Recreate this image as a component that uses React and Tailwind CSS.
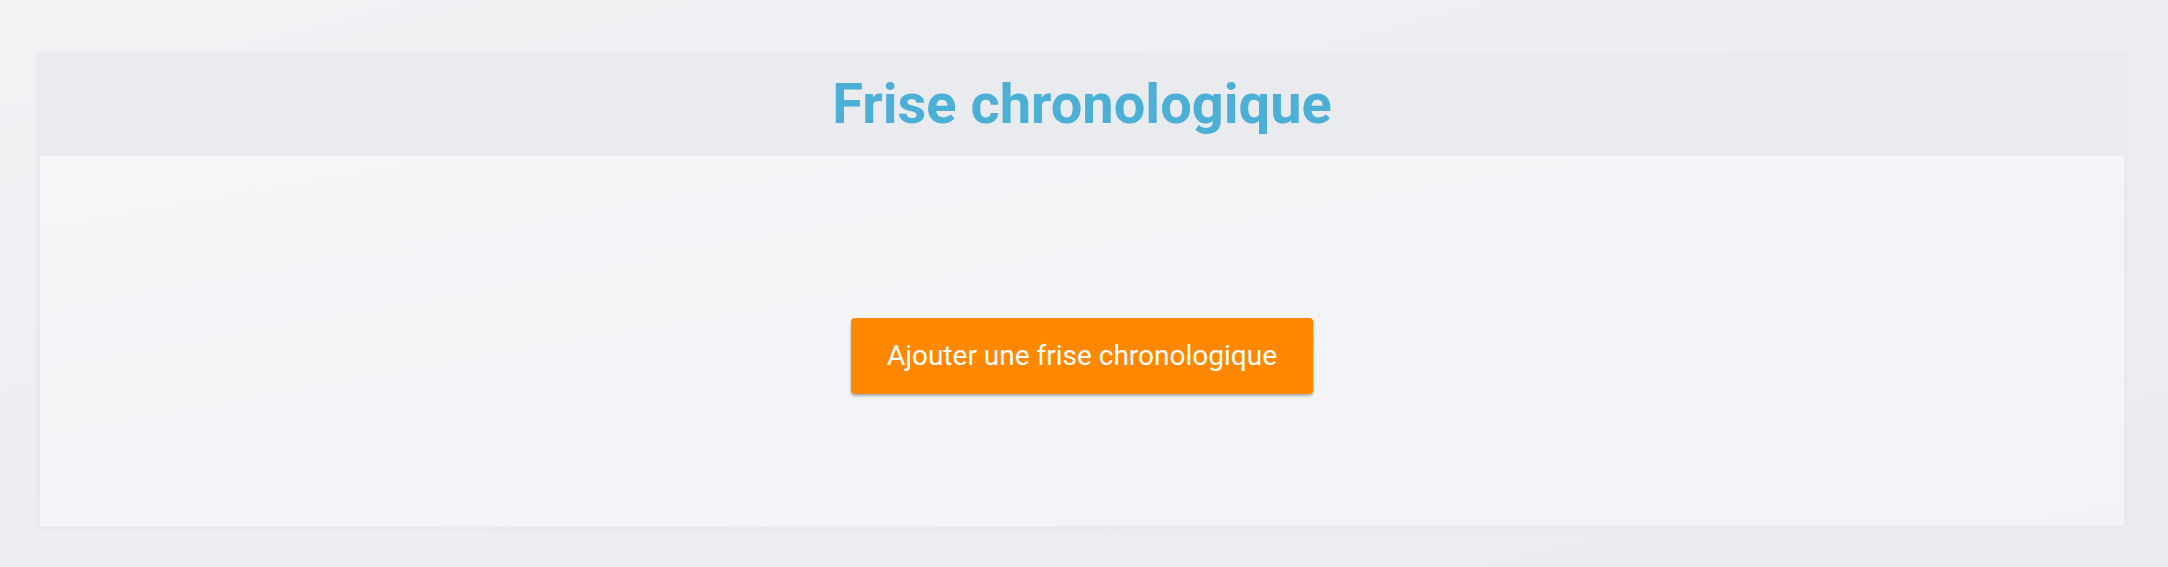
import React from "react";

const Timeline = () => {
  return (
    <div className="min-h-screen w-full bg-gradient-to-br from-[#f1f2f4] to-[#eaebef] pl-[36px] pr-[40px] pt-[52px] pb-[37px] font-['Roboto',sans-serif]">
      <div className="bg-[#e9eaee] px-[4px] pb-[4px]">
        {/* Header */}
        <div className="-mx-[4px] flex h-[104px] items-center justify-center bg-[#eaebef]">
          <h1 className="text-[56px] font-bold leading-none text-[#4bafd6]">
            Frise chronologique
          </h1>
        </div>

        {/* Body */}
        <div className="flex justify-center bg-gradient-to-br from-[#f5f6f8] to-[#f2f3f6] pt-[162px] pb-[132px]">
          <button className="h-[76px] w-[462px] rounded-[4px] bg-[#ff8800] text-[28px] text-white shadow-[0_2px_3px_rgba(0,0,0,0.3)]">
            Ajouter une frise chronologique
          </button>
        </div>
      </div>
    </div>
  );
};

export default function App() {
  return <Timeline />;
}
